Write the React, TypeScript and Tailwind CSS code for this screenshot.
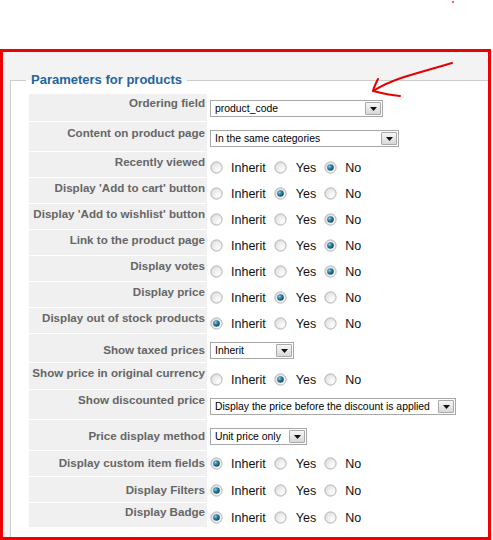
import React from "react";

type Row = {
  label: string;
  h: string;
  lp: string;
  vp: string;
  kind: "select" | "radio";
  sel?: number;
  text?: string;
  w?: string;
};

const rows: Row[] = [
  { label: "Ordering field", h: "h-[28px]", lp: "pt-[2px]", vp: "pt-[6px]", kind: "select", text: "product_code", w: "w-[173px]" },
  { label: "Content on product page", h: "h-[30px]", lp: "pt-[4px]", vp: "pt-[8px]", kind: "select", text: "In the same categories", w: "w-[189px]" },
  { label: "Recently viewed", h: "h-[26px]", lp: "pt-[3px]", vp: "pt-[9px]", kind: "radio", sel: 2 },
  { label: "Display 'Add to cart' button", h: "h-[26px]", lp: "pt-[3px]", vp: "pt-[9px]", kind: "radio", sel: 1 },
  { label: "Display 'Add to wishlist' button", h: "h-[26px]", lp: "pt-[3px]", vp: "pt-[9px]", kind: "radio", sel: 2 },
  { label: "Link to the product page", h: "h-[26px]", lp: "pt-[3px]", vp: "pt-[9px]", kind: "radio", sel: 2 },
  { label: "Display votes", h: "h-[26px]", lp: "pt-[3px]", vp: "pt-[9px]", kind: "radio", sel: 2 },
  { label: "Display price", h: "h-[26px]", lp: "pt-[3px]", vp: "pt-[9px]", kind: "radio", sel: 1 },
  { label: "Display out of stock products", h: "h-[26px]", lp: "pt-[3px]", vp: "pt-[9px]", kind: "radio", sel: 0 },
  { label: "Show taxed prices", h: "h-[29px]", lp: "pt-[9px]", vp: "pt-[8px]", kind: "select", text: "Inherit", w: "w-[84px]" },
  { label: "Show price in original currency", h: "h-[27px]", lp: "pt-[3px]", vp: "pt-[10px]", kind: "radio", sel: 1 },
  { label: "Show discounted price", h: "h-[30px]", lp: "pt-[3px]", vp: "pt-[8px]", kind: "select", text: "Display the price before the discount is applied", w: "w-[246px]" },
  { label: "Price display method", h: "h-[31px]", lp: "pt-[9px]", vp: "pt-[8px]", kind: "select", text: "Unit price only", w: "w-[97px]" },
  { label: "Display custom item fields", h: "h-[26px]", lp: "pt-[5px]", vp: "pt-[6px]", kind: "radio", sel: 0 },
  { label: "Display Filters", h: "h-[26px]", lp: "pt-[6px]", vp: "pt-[7px]", kind: "radio", sel: 0 },
  { label: "Display Badge", h: "h-[25px]", lp: "pt-[2px]", vp: "pt-[8px]", kind: "radio", sel: 0 },
];

function Radio({ on }: { on: boolean }) {
  return (
    <svg width="13" height="13" viewBox="0 0 13 13" className="shrink-0">
      <defs>
        <radialGradient id="rOff" cx="0.7" cy="0.7" r="0.8">
          <stop offset="0" stopColor="#ffffff" />
          <stop offset="1" stopColor="#dedede" />
        </radialGradient>
        <radialGradient id="rOn" cx="0.35" cy="0.35" r="0.7">
          <stop offset="0" stopColor="#7fd0ea" />
          <stop offset="0.5" stopColor="#2a7898" />
          <stop offset="1" stopColor="#0f4a62" />
        </radialGradient>
      </defs>
      <circle cx="6.5" cy="6.5" r="5.6" fill="url(#rOff)" stroke="#b0b0b0" strokeWidth="1" />
      {on && <circle cx="6.5" cy="6.5" r="3.3" fill="url(#rOn)" />}
    </svg>
  );
}

function Radios({ sel }: { sel: number }) {
  return (
    <div className="flex items-center h-[13px] text-[12.5px] leading-[14px] text-[#111]">
      <Radio on={sel === 0} />
      <span className="ml-[8px]">Inherit</span>
      <span className="ml-[8px]"><Radio on={sel === 1} /></span>
      <span className="ml-[9px]">Yes</span>
      <span className="ml-[8px]"><Radio on={sel === 2} /></span>
      <span className="ml-[8px]">No</span>
    </div>
  );
}

function Select({ text, w }: { text: string; w: string }) {
  return (
    <div className={`${w} h-[17px] border border-[#a7a7a7] bg-white flex items-center justify-between`}>
      <span className="pl-[4px] text-[10.4px] leading-[13px] text-black whitespace-nowrap">{text}</span>
      <div className="w-[16px] h-[13px] mr-[1px] shrink-0 border border-[#a9a9a9] rounded-[1px] bg-gradient-to-b from-[#f6f6f6] to-[#d8d8d8] flex items-center justify-center">
        <svg width="7" height="4" viewBox="0 0 7 4">
          <path d="M0 0 L7 0 L3.5 4 Z" fill="#111" />
        </svg>
      </div>
    </div>
  );
}

export default function App() {
  return (
    <div className="relative w-[493px] h-[540px] bg-white overflow-hidden font-['Liberation_Sans',Arial,sans-serif]">
      <div className="h-[49px]" />
      <div className="w-[491px] h-[491px] border-[3px] border-[#ee0000] overflow-hidden">
        <div className="h-full bg-[#f3f3f3] pl-[7px] pt-[20px]">
          <fieldset className="border border-[#cccccc] bg-white mr-[-20px] pl-[18px] pt-[6px] pb-[30px]">
            <legend className="ml-[-3px] px-[5px] text-[13px] leading-[16px] font-bold text-[#24649b]">
              Parameters for products
            </legend>
            {rows.map((r, i) => (
              <div key={i} className={`flex ${r.h}`}>
                <div
                  className={`w-[178px] shrink-0 bg-[#f0f0f0] border-b border-white text-right pr-[2px] ${r.lp} text-[11.6px] leading-[14px] font-bold text-[#666666] whitespace-nowrap`}
                >
                  {r.label}
                </div>
                <div className={`pl-[3px] ${r.vp}`}>
                  {r.kind === "select" ? <Select text={r.text!} w={r.w!} /> : <Radios sel={r.sel!} />}
                </div>
              </div>
            ))}
          </fieldset>
        </div>
      </div>
      <svg className="absolute left-0 top-0 pointer-events-none" width="493" height="120" viewBox="0 0 493 120">
        <circle cx="453" cy="2" r="1" fill="#e33" />
        <path
          d="M452 63 C438 67 420 72 404 77 C392 81 381 86 373 91"
          fill="none"
          stroke="#e60000"
          strokeWidth="2"
          strokeLinecap="round"
        />
        <path
          d="M378 79 C376 83 374 87 373 91 C381 93 390 95 400 96"
          fill="none"
          stroke="#e60000"
          strokeWidth="2"
          strokeLinecap="round"
          strokeLinejoin="round"
        />
      </svg>
    </div>
  );
}
